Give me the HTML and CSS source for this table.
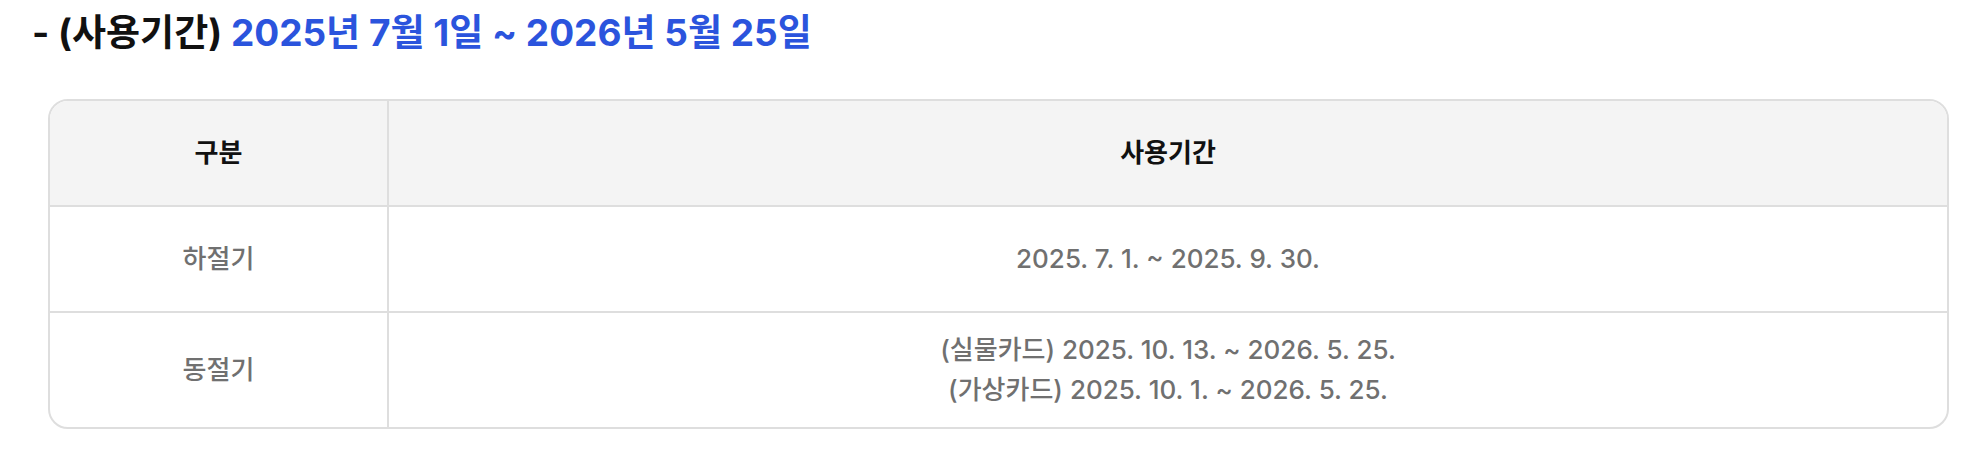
FILE: index.html
```html
<!DOCTYPE html>
<html lang="ko">
<head>
<meta charset="utf-8">
<link rel="stylesheet" href="styles.css">
</head>
<body>
<div class="page">
  <h2 class="title">- (사용기간) <span class="hl">2025년 7월 1일 ~ 2026년 5월 25일</span></h2>
  <div class="table-wrap">
    <table class="period">
      <thead>
        <tr><th class="col-a">구분</th><th>사용기간</th></tr>
      </thead>
      <tbody>
        <tr><td class="col-a">하절기</td><td>2025. 7. 1. ~ 2025. 9. 30.</td></tr>
        <tr class="tall"><td class="col-a">동절기</td><td>(실물카드) 2025. 10. 13. ~ 2026. 5. 25.<br>(가상카드) 2025. 10. 1. ~ 2026. 5. 25.</td></tr>
      </tbody>
    </table>
  </div>
</div>
</body>
</html>
```

FILE: styles.css
```css
html, body {
  margin: 0;
  padding: 0;
  background: #ffffff;
}
body {
  font-family: Inter, "Noto Sans CJK KR", "Noto Sans", sans-serif;
}
.page {
  padding: 12px 23px 0 32px;
}
.title {
  margin: 0;
  font-size: 37px;
  font-weight: 700;
  line-height: 42px;
  color: #111111;
}
.hl {
  color: #2b54dd;
}
.table-wrap {
  margin: 45px 0 0 16px;
  border: 2px solid #dedede;
  border-radius: 20px;
  overflow: hidden;
}
.period {
  width: 100%;
  border-collapse: collapse;
  table-layout: fixed;
}
.period th,
.period td {
  text-align: center;
  vertical-align: middle;
  font-size: 26px;
  line-height: 40px;
  border-left: 2px solid #dedede;
  border-top: 2px solid #dedede;
  padding: 17px 10px;
}
.period th {
  background: #f4f4f4;
  color: #111111;
  font-weight: 700;
  height: 70px;
  border-top: none;
}
.period td {
  color: #707070;
  font-weight: 500;
  height: 70px;
}
.period .col-a {
  width: 317px;
  border-left: none;
}
```
